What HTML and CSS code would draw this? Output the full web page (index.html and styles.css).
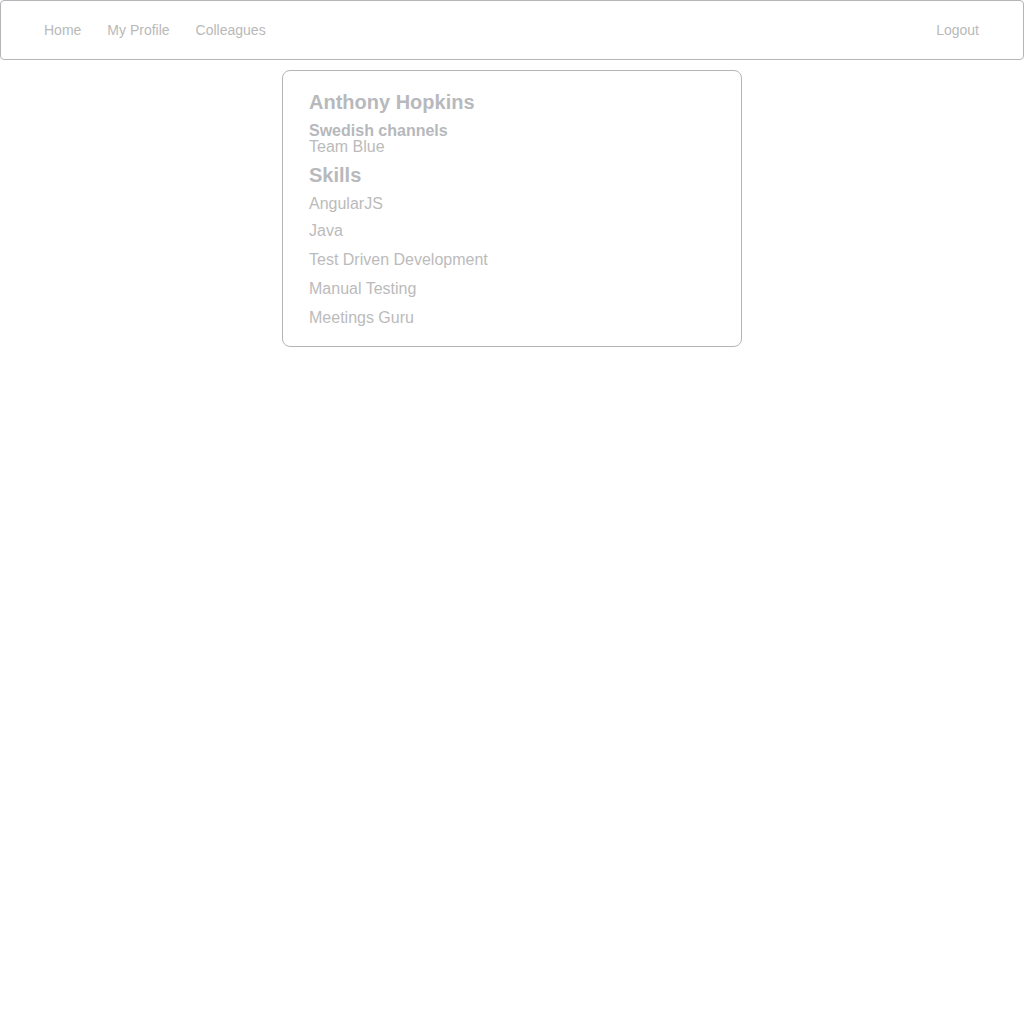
FILE: index.html
```html
<!DOCTYPE html>
<html>
<head>
<meta charset="utf-8">
<link rel="stylesheet" href="styles.css">
</head>
<body>
<nav class="navbar">
  <div class="nav-left">
    <a class="nav-link" href="#">Home</a>
    <a class="nav-link" href="#">My Profile</a>
    <a class="nav-link" href="#">Colleagues</a>
  </div>
  <div class="nav-right">
    <a class="nav-link" href="#">Logout</a>
  </div>
</nav>
<main class="main">
  <section class="card">
    <h1 class="name">Anthony Hopkins</h1>
    <div class="dept">Swedish channels</div>
    <div class="team">Team Blue</div>
    <h2 class="skills-title">Skills</h2>
    <ul class="skills">
      <li class="skill">AngularJS</li>
      <li class="skill">Java</li>
      <li class="skill">Test Driven Development</li>
      <li class="skill">Manual Testing</li>
      <li class="skill">Meetings Guru</li>
    </ul>
  </section>
</main>
</body>
</html>
```

FILE: styles.css
```css
* { box-sizing: border-box; }
html, body {
  margin: 0;
  padding: 0;
  background: #ffffff;
  font-family: "Liberation Sans", Arial, sans-serif;
}
.navbar {
  height: 60px;
  border: 1px solid #b3b5b9;
  border-radius: 4px;
  display: flex;
  align-items: center;
  justify-content: space-between;
  padding: 0 31px 0 30px;
}
.nav-left, .nav-right {
  display: flex;
  align-items: center;
}
.nav-link {
  font-size: 14px;
  line-height: 20px;
  color: #b9b9b9;
  text-decoration: none;
  padding: 0 13px;
}
.main {
  display: flex;
  justify-content: center;
  padding-top: 10px;
}
.card {
  width: 460px;
  border: 1px solid #b3b5b9;
  border-radius: 8px;
  padding: 19px 26px 18px 26px;
}
.name {
  margin: 0;
  font-size: 20px;
  line-height: 24px;
  font-weight: bold;
  color: #b8b9bc;
}
.dept {
  margin-top: 9px;
  font-size: 16px;
  line-height: 16px;
  font-weight: bold;
  color: #b6b8bc;
}
.team {
  font-size: 16px;
  line-height: 16px;
  color: #bbbbbb;
}
.skills-title {
  margin: 8px 0 0 0;
  font-size: 20px;
  line-height: 24px;
  font-weight: bold;
  color: #b8b9bc;
}
.skills {
  list-style: none;
  margin: 7px 0 0 0;
  padding: 0;
  display: flex;
  flex-direction: column;
  gap: 9px;
}
.skill {
  font-size: 16px;
  line-height: 20px;
  color: #bbbbbb;
}
.skill:first-child {
  margin-bottom: -2px;
}
```
